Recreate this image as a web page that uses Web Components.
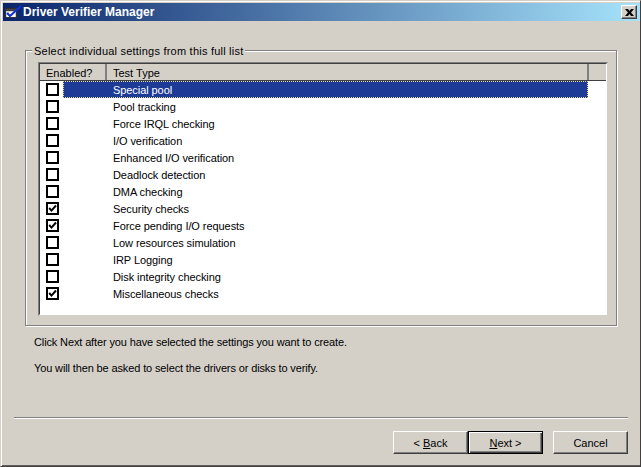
<!DOCTYPE html>
<html><head><meta charset="utf-8"><style>
html,body{margin:0;padding:0;background:#d4d0c8;overflow:hidden}
body{font:11px/14px "Liberation Sans",Arial,sans-serif;color:#000}
</style></head><body>
<win-dialog>
  <win-titlebar slot="title">Driver Verifier Manager</win-titlebar>
  <win-group legend="Select individual settings from this full list">
    <list-view>
      <list-row selected>Special pool</list-row>
      <list-row>Pool tracking</list-row>
      <list-row>Force IRQL checking</list-row>
      <list-row>I/O verification</list-row>
      <list-row>Enhanced I/O verification</list-row>
      <list-row>Deadlock detection</list-row>
      <list-row>DMA checking</list-row>
      <list-row checked>Security checks</list-row>
      <list-row checked>Force pending I/O requests</list-row>
      <list-row>Low resources simulation</list-row>
      <list-row>IRP Logging</list-row>
      <list-row>Disk integrity checking</list-row>
      <list-row checked>Miscellaneous checks</list-row>
    </list-view>
  </win-group>
  <wiz-notes>
    <p>Click Next after you have selected the settings you want to create.</p>
    <p>You will then be asked to select the drivers or disks to verify.</p>
  </wiz-notes>
  <wiz-footer>
    <win-button slot="nav"><span>&lt; <u>B</u>ack</span></win-button>
    <win-button slot="nav" default><span><u>N</u>ext &gt;</span></win-button>
    <win-button slot="cancel"><span>Cancel</span></win-button>
  </wiz-footer>
</win-dialog>
<script>
function def(name, html){
  customElements.define(name, class extends HTMLElement{
    constructor(){super();this.attachShadow({mode:'open'}).innerHTML=typeof html==='function'?html(this):html;}
  });
}
def('win-dialog',`<style>
:host{display:flex;flex-direction:column;box-sizing:border-box;width:641px;height:467px;background:#d4d0c8;
border:1px solid;border-color:#d4d0c8 #404040 #404040 #d4d0c8;box-shadow:inset 1px 1px 0 #fff,inset 0 -1px 0 #606060;padding:2px 0 2px 2px}
</style><slot name="title"></slot><slot></slot>`);
def('win-titlebar',`<style>
:host{display:flex;align-items:center;height:18px;flex:none;padding:0 3px 0 2px;color:#fff;font-weight:bold;font-size:12px;
background:linear-gradient(90deg,#0a246a,#a6e3fb);white-space:nowrap}
svg.app{width:16px;height:16px;flex:none;margin-right:2px}
.t{flex:1}
.x{width:16px;height:14px;box-sizing:border-box;background:#d4d0c8;border:1px solid;border-color:#fff #404040 #404040 #fff;box-shadow:inset -1px -1px 0 #808080;display:flex;align-items:center;justify-content:center}
</style>
<svg class="app" viewBox="0 0 16 16"><rect x=".5" y="4.500" width="11" height="9" fill="#d4d0c8" stroke="#303030"/><rect x="1" y="5" width="10" height="2" fill="#404040"/><rect x="2" y="8" width="8" height="5" fill="#fff"/><path d="M3 9h1M5 11h1M7 10h1" stroke="#9090c0"/><path d="M2 9l3 3L16 2" fill="none" stroke="#1030e0" stroke-width="2"/></svg>
<span class="t"><slot></slot></span>
<span class="x"><svg width="9" height="7" viewBox="0 0 9 7"><path d="M0 0h3l1.500 2L6 0h3L6 3.500 9 7H6L4.500 5 3 7H0l3-3.500z" fill="#000"/></svg></span>`);
def('win-group',(el)=>`<style>
:host{display:block;position:relative;box-sizing:border-box;flex:none;width:592px;height:276px;margin:29px 0 0 22px;
border:1px solid #808080;box-shadow:1px 1px 0 #fff,inset 1px 1px 0 #fff;padding:11px 8px 0 12px}
.l{position:absolute;left:6px;top:-7px;background:#d4d0c8;padding:0 2px;white-space:nowrap;letter-spacing:.22px}
</style><span class="l">${el.getAttribute('legend')}</span><slot></slot>`);
def('list-view',`<style>
:host{display:block;box-sizing:border-box;height:254px;background:#fff;border:1px solid;border-color:#808080 #d4d0c8 #d4d0c8 #808080;padding:0;overflow:hidden}
.w{border:1px solid;border-color:#404040 #fff #fff #404040;height:100%;box-sizing:border-box}
.h{display:flex;height:17px;box-sizing:border-box;background:#d4d0c8;border-bottom:1px solid #404040;line-height:18px}
.h span{box-sizing:border-box;border-right:2px solid #808080;padding-left:6px}
.h .a{width:67px}.h .b{width:482px}.h .c{flex:1;border:0}
</style><div class="w"><div class="h"><span class="a">Enabled?</span><span class="b">Test Type</span><span class="c"></span></div><slot></slot></div>`);
def('list-row',(el)=>`<style>
:host{display:flex;height:17px;align-items:center;margin-right:18px;white-space:nowrap;letter-spacing:-.07px}
.c{width:13px;height:13px;box-sizing:border-box;border:2px solid #000;background:#fff;margin:0 4px 0 6px;flex:none;display:block}
svg{display:block}
.t{flex:1;height:17px;line-height:19px;box-sizing:border-box;padding-left:50px}
:host([selected]) .t{background:#1d3b96;color:#fff;outline:1px dotted #e8d98c;outline-offset:-1px}
</style><span class="c">${el.hasAttribute('checked')?'<svg width="9" height="9" viewBox="0 0 9 9"><path d="M1.200 4l2.300 2.600L8 1.500" fill="none" stroke="#000" stroke-width="2"/></svg>':''}</span><span class="t"><slot></slot></span>`);
def('wiz-notes',`<style>
:host{display:block;flex:none;margin:9px 0 0 31px;letter-spacing:-.13px}
::slotted(p){margin:0 0 12px;line-height:14px}
</style><slot></slot>`);
def('wiz-footer',`<style>
:host{display:flex;flex:none;flex-direction:column;margin:30px 12px 0 11px}
.sep{height:1px;background:#808080;box-shadow:0 1px 0 #fff}
.r{display:flex;justify-content:flex-end;gap:10px;margin-top:13px}
.n{display:flex}
</style><div class="sep"></div><div class="r"><div class="n"><slot name="nav"></slot></div><slot name="cancel"></slot></div>`);
def('win-button',`<style>
:host{display:flex;align-items:center;justify-content:center;box-sizing:border-box;width:75px;height:23px;background:#d4d0c8;
border:1px solid;border-color:#fff #404040 #404040 #fff;box-shadow:inset -1px -1px 0 #808080;white-space:nowrap}
:host([default]){border:1px solid #000;box-shadow:inset 1px 1px 0 #fff,inset -1px -1px 0 #404040,inset -2px -2px 0 #808080}
</style><slot></slot>`);
</script>
</body></html>
